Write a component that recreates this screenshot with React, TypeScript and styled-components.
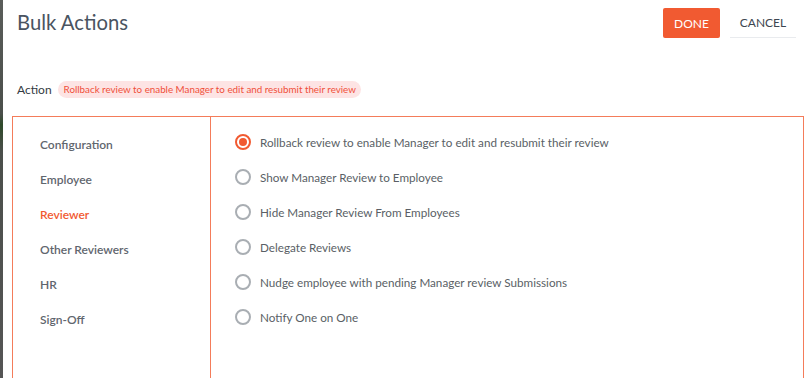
import React from "react";
import styled, { createGlobalStyle } from "styled-components";

const Global = createGlobalStyle`
  html, body { margin: 0; padding: 0; background: #ffffff; }
  body { font-family: Lato, "Open Sans", sans-serif; }
  * { box-sizing: border-box; }
`;

const Page = styled.div`
  display: flex;
  width: 810px;
  height: 378px;
  overflow: hidden;
`;

const Backdrop = styled.div`
  width: 3px;
  flex: none;
  background: linear-gradient(180deg, #5a5d5a 0%, #4b4f4b 30%, #2f4a2a 33%, #4b4f4b 40%, #555 100%);
`;

const Modal = styled.div`
  flex: 1;
  display: flex;
  flex-direction: column;
  padding: 0 6px 0 9px;
  background: #fff;
`;

const Header = styled.div`
  display: flex;
  align-items: flex-start;
  justify-content: space-between;
  padding: 8px 8px 0 5px;
  height: 72px;
`;

const Title = styled.h1`
  margin: 0;
  padding-top: 1px;
  font-family: Lato, sans-serif;
  font-weight: 400;
  font-size: 20.3px;
  line-height: 26px;
  color: #4a5461;
`;

const Buttons = styled.div`
  display: flex;
  gap: 10px;
`;

const Button = styled.button<{ $primary?: boolean }>`
  height: 30px;
  padding: 0;
  border: none;
  font-family: Lato, sans-serif;
  font-size: 12px;
  cursor: pointer;
  background: ${(p) => (p.$primary ? "#f15a31" : "#fff")};
  color: ${(p) => (p.$primary ? "#fff" : "#3d4650")};
  border-bottom: ${(p) => (p.$primary ? "none" : "1px solid #e9ebee")};
  border-radius: ${(p) => (p.$primary ? "2px" : "0")};
  width: ${(p) => (p.$primary ? "57px" : "66px")};
`;

const ActionRow = styled.div`
  display: flex;
  align-items: center;
  gap: 6px;
  padding-left: 5px;
  height: 34px;
  margin-bottom: 10px;
`;

const ActionLabel = styled.span`
  font-size: 12px;
  color: #333a42;
`;

const Pill = styled.span`
  display: inline-flex;
  align-items: center;
  height: 17px;
  padding: 0 5px 0 6px;
  border-radius: 9px;
  background: #fde4e4;
  color: #f0503a;
  font-size: 9.8px;
`;

const Box = styled.div`
  flex: 1;
  display: grid;
  grid-template-columns: 198px 1fr;
  border: 1px solid #f47c5a;
  border-bottom: none;
`;

const Nav = styled.nav`
  display: flex;
  flex-direction: column;
  gap: 17px;
  padding: 19px 0 0 27px;
  border-right: 1px solid #f47c5a;
`;

const NavItem = styled.div<{ $active?: boolean }>`
  font-size: 12px;
  line-height: 18px;
  font-weight: 600;
  color: ${(p) => (p.$active ? "#f15a31" : "#5f666e")};
`;

const Options = styled.div`
  display: flex;
  flex-direction: column;
  gap: 17px;
  padding: 16px 0 0 24px;
`;

const Option = styled.label`
  display: flex;
  align-items: center;
  gap: 9px;
  font-size: 11.7px;
  line-height: 18px;
  color: #5a5f66;
  cursor: pointer;
`;

const Radio = styled.span<{ $checked?: boolean }>`
  width: 16px;
  height: 16px;
  flex: none;
  border-radius: 50%;
  border: 2px solid ${(p) => (p.$checked ? "#f15a31" : "#a9aeb3")};
  display: flex;
  align-items: center;
  justify-content: center;
  &::after {
    content: "";
    width: 8px;
    height: 8px;
    border-radius: 50%;
    background: ${(p) => (p.$checked ? "#f15a31" : "transparent")};
  }
`;

const navItems = ["Configuration", "Employee", "Reviewer", "Other Reviewers", "HR", "Sign-Off"];
const options = [
  "Rollback review to enable Manager to edit and resubmit their review",
  "Show Manager Review to Employee",
  "Hide Manager Review From Employees",
  "Delegate Reviews",
  "Nudge employee with pending Manager review Submissions",
  "Notify One on One",
];

export default function App() {
  return (
    <>
      <Global />
      <Page>
        <Backdrop />
        <Modal>
          <Header>
            <Title>Bulk Actions</Title>
            <Buttons>
              <Button $primary>DONE</Button>
              <Button>CANCEL</Button>
            </Buttons>
          </Header>
          <ActionRow>
            <ActionLabel>Action</ActionLabel>
            <Pill>{options[0]}</Pill>
          </ActionRow>
          <Box>
            <Nav>
              {navItems.map((n) => (
                <NavItem key={n} $active={n === "Reviewer"}>
                  {n}
                </NavItem>
              ))}
            </Nav>
            <Options>
              {options.map((o, i) => (
                <Option key={o}>
                  <Radio $checked={i === 0} />
                  {o}
                </Option>
              ))}
            </Options>
          </Box>
        </Modal>
      </Page>
    </>
  );
}
